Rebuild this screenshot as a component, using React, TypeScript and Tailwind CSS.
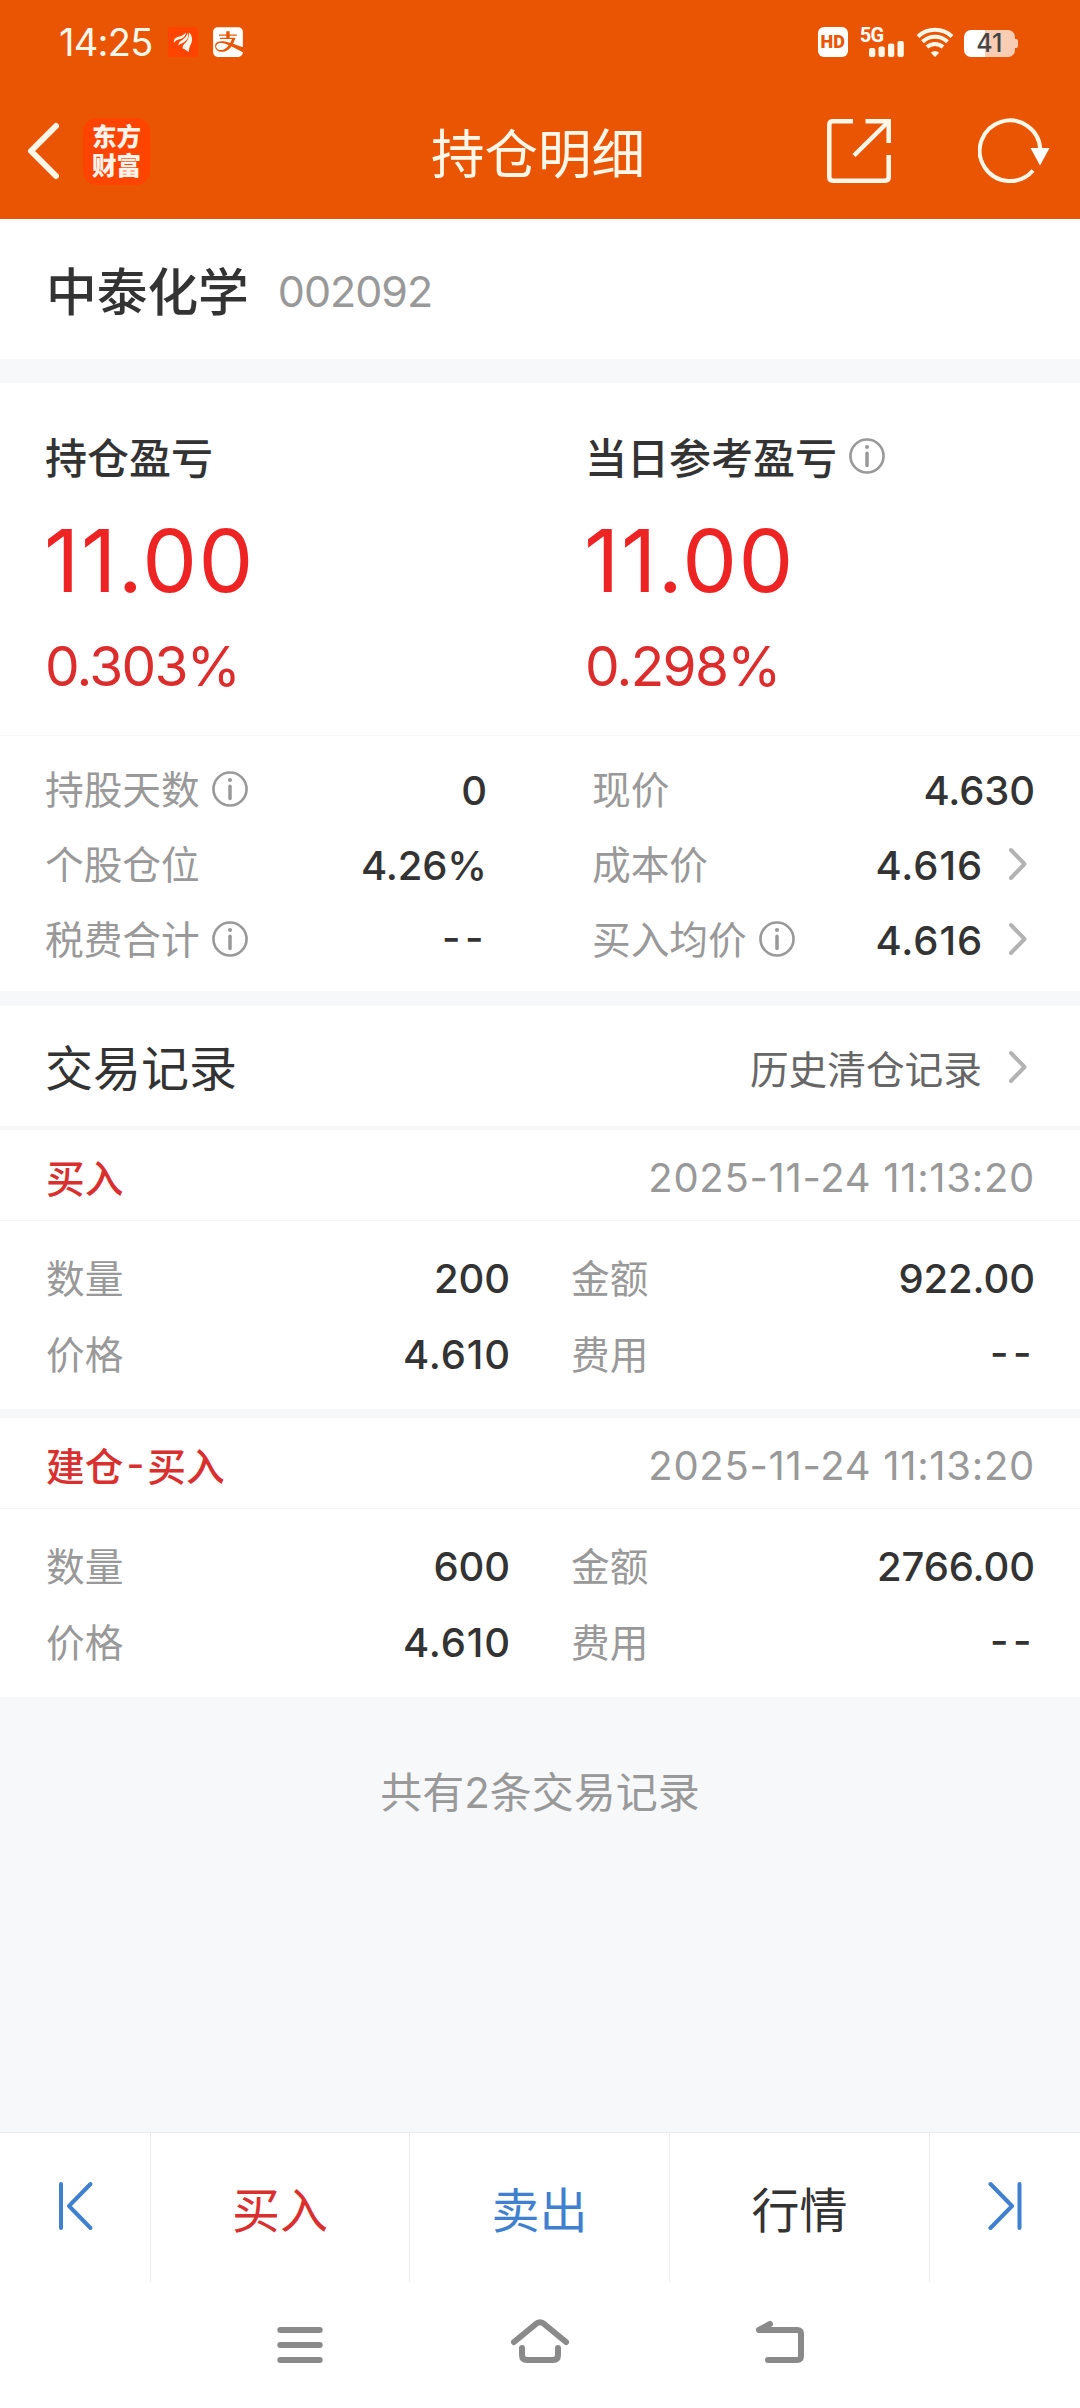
import React from 'react';
import clsx from 'clsx';
import { FaAlipay } from 'react-icons/fa';

const CJK = "font-['Noto_Sans_CJK_SC',sans-serif]";

function InfoIcon() {
  return (
    <svg width="36" height="36" viewBox="0 0 37 37" fill="none" stroke="#999999" className="shrink-0">
      <circle cx="18.5" cy="18.5" r="17" strokeWidth="2.7" />
      <circle cx="18.5" cy="9.3" r="2.1" fill="#999999" stroke="none" />
      <path d="M18.5 15.8V28.2" strokeWidth="3.6" strokeLinecap="round" />
    </svg>
  );
}

function Chevron() {
  return (
    <svg width="20" height="34" viewBox="0 0 20 34" fill="none" className="mr-[7px] ml-[26px] shrink-0">
      <path d="M3 3L16.5 17L3 31" stroke="#b3b3b3" strokeWidth="4" strokeLinecap="round" strokeLinejoin="round" />
    </svg>
  );
}

function Value({ children }: { children: string }) {
  const dashed = children === '--';
  const narrow = children.includes('1');
  return (
    <span
      className={clsx(
        'text-[40px] font-medium leading-none text-[#333333]',
        dashed && '-mt-[2px] -mr-px pb-[3px] tracking-[4.5px]',
        !dashed && (narrow ? '-mr-px tracking-[0.9px]' : 'tracking-[-0.1px]'),
      )}
    >
      {children}
    </span>
  );
}

function StatusBar() {
  return (
    <div className="flex h-[84px] items-center pl-[59px]">
      <span className="text-[38px] leading-none tracking-[-0.7px] text-[#fff8ea]">14:25</span>
      <svg width="30" height="30" viewBox="0 0 30 30" className="ml-[15px]">
        <rect width="30" height="30" rx="2" fill="#ff4400" />
        <g fill="#fff8ea">
          <path d="M6 16C5.500 12 7.500 10.500 10.500 9.800C13.500 9 16 8 18 5.500C17.500 9.500 15 11.500 11.500 12.300C9 12.900 7.200 14 6 16Z" />
          <path d="M10.500 18.500C10.500 15 12.500 14 14.500 12.700C17 11 19 9 20 5.500C21 10 19.500 13 16 15.200C13.500 16.600 12 17 10.500 18.500Z" />
          <path d="M14.500 21.500C14.500 18.500 16 17.200 17.500 15.700C19.500 13.500 21.200 10.500 21.200 5.500C24.500 8.500 25 14 22.500 18C21.500 20 20.800 22 20.800 25C18 23.500 16.500 21.500 14.500 21.500Z" />
        </g>
      </svg>
      <FaAlipay className="ml-[15px] h-[34px] w-[30px] text-white" />
      <div className="ml-[575px] flex h-[30px] w-[30px] items-center justify-center rounded-[6px] bg-white font-['Roboto',sans-serif] text-[18px] font-black leading-none text-[#ea5504]">
        HD
      </div>
      <div className="relative ml-[12px] h-[30px] w-[45px]">
        <span className="absolute -top-[2px] left-0 font-['Roboto',sans-serif] text-[20px] font-bold leading-none tracking-[-0.8px] text-white">5G</span>
        <svg width="45" height="30" viewBox="0 0 45 30" fill="#fff8ea">
          <rect x="9" y="21" width="6.300" height="9" rx="2" />
          <rect x="18.500" y="19.500" width="6.300" height="10.500" rx="2" />
          <rect x="28" y="16.500" width="6.300" height="13.500" rx="2" />
          <rect x="37.500" y="14" width="6.300" height="16" rx="2" />
        </svg>
      </div>
      <svg width="38" height="30" viewBox="0 0 38 30" fill="none" stroke="#fff8ea" strokeWidth="4" className="ml-[11px]">
        <path d="M2 9.500A25 25 0 0 1 36 9.500" />
        <path d="M6.500 14.700A18 18 0 0 1 31.500 14.700" />
        <path d="M11 20A12 12 0 0 1 27 20" />
        <path d="M19 30L14.800 25.800Q19 22 23.200 25.800Z" fill="#fff8ea" stroke="none" />
      </svg>
      <div className="ml-[10px] flex items-center pt-[3px]">
        <div className="flex h-[27px] w-[51px] items-center justify-center rounded-[7px] bg-linear-to-r from-white from-41% to-[#f9cdb4] to-41% text-[25px] font-medium leading-none text-[#444444]">
          41
        </div>
        <div className="h-[9px] w-[3px] rounded-r-[2px] bg-[#f9cdb4]" />
      </div>
    </div>
  );
}

function NavBar() {
  return (
    <div className="flex h-[135px] items-center pb-px pl-[26px]">
      <svg width="33" height="58" viewBox="0 0 33 58" fill="none">
        <path d="M30 4L5 29L30 54" stroke="#fff8ea" strokeWidth="6" strokeLinecap="round" strokeLinejoin="round" />
      </svg>
      <div className={clsx('ml-[24px] flex h-[67px] w-[67px] flex-col items-center justify-center rounded-[14px] bg-[#ff4400] pb-[3px] text-[24.500px] font-black leading-[29px] text-[#fff3ec]', CJK)}>
        <span>东方</span>
        <span>财富</span>
      </div>
      <h1 className={clsx('ml-[281px] w-[216px] text-[53.500px] font-normal leading-none text-[#fff8ea]', CJK)}>持仓明细</h1>
      <svg width="64" height="64" viewBox="0 0 64 64" fill="none" stroke="#fff8ea" strokeWidth="4.500" className="ml-[180px]">
        <path d="M26 2.300H6Q2.300 2.300 2.300 6V58Q2.300 61.700 6 61.700H58Q61.700 61.700 61.700 58V36" />
        <path d="M38.500 2.300H61.700V24" />
        <path d="M27 36.500L60.500 3.500" />
      </svg>
      <svg width="72" height="66" viewBox="0 0 72 66" fill="none" className="ml-[87px]">
        <path d="M55 52.500A30.300 30.300 0 1 1 62.300 32" stroke="#fff8ea" strokeWidth="4" />
        <path d="M52.500 30H71.500L62 47.500Z" fill="#ffffff" />
      </svg>
    </div>
  );
}

function ProfitColumn({ label, info, amount, percent }: { label: string; info?: boolean; amount: string; percent: string }) {
  return (
    <div className="pt-[52px]">
      <div className="flex h-[42px] items-center gap-[12px]">
        <span className={clsx('text-[42px] font-medium leading-none text-[#333333]', CJK)}>{label}</span>
        {info && <InfoIcon />}
      </div>
      <div className="-ml-px mt-[40px] text-[87px] leading-none tracking-[1.5px] text-[#ee2424]">{amount}</div>
      <div className="mt-[35px] text-[55px] leading-none tracking-[-1.7px] text-[#dd2c2c]">{percent}</div>
    </div>
  );
}

function StatRow({ label, info, value, arrow }: { label: string; info?: boolean; value: string; arrow?: boolean }) {
  return (
    <div className="flex h-[75px] items-center">
      <span className={clsx('pb-[2px] text-[38.7px] leading-none text-[#999999]', CJK)}>{label}</span>
      {info && <div className="ml-[12px]"><InfoIcon /></div>}
      <div className="ml-auto flex items-center">
        <div className="flex pt-[4px]">
          <Value>{value}</Value>
        </div>
        {arrow && <Chevron />}
      </div>
    </div>
  );
}

function RecordRow({ cells }: { cells: [string, string][] }) {
  return (
    <div className="flex h-[76px] gap-[61px]">
      {cells.map(([label, value]) => (
        <div key={label} className="flex w-[464px] items-center justify-between">
          <span className={clsx('text-[38.700px] leading-none text-[#999999]', CJK)}>{label}</span>
          <div className="flex pt-[6px]">
            <Value>{value}</Value>
          </div>
        </div>
      ))}
    </div>
  );
}

function TradeRecord({ title, time, qty, amount, price }: { title: string; time: string; qty: string; amount: string; price: string }) {
  return (
    <section className="h-[279px] bg-white">
      <div className="flex h-[91px] items-center justify-between border-b border-[#f5f6f8] pl-[46px] pr-[45px]">
        <div className={clsx('flex pt-[2px] text-[38.700px] font-medium leading-none text-[#d9302f]', CJK)}>
          {title.split('-').map((part, i) => (
            <React.Fragment key={part}>
              {i > 0 && <span className="px-[3px] font-['Inter',sans-serif]">-</span>}
              <span>{part}</span>
            </React.Fragment>
          ))}
        </div>
        <span className="pt-[6px] text-[40px] leading-none tracking-[0.700px] text-[#999999]">{time}</span>
      </div>
      <div className="pl-[46px] pr-[45px] pt-[17px]">
        <RecordRow cells={[['数量', qty], ['金额', amount]]} />
        <RecordRow cells={[['价格', price], ['费用', '--']]} />
      </div>
    </section>
  );
}

function BottomBar() {
  return (
    <div className="grid h-[150px] grid-cols-[151px_259px_260px_260px_150px] border-t border-[#ececec] bg-white">
      <div className="flex items-center border-r border-[#ececec] pb-[4px] pl-[58px]">
        <svg width="36" height="50" viewBox="0 0 36 50" fill="none" stroke="#3f80cf" strokeWidth="4" strokeLinecap="round" strokeLinejoin="round">
          <path d="M3 3V47M32.500 3L11 25L32.500 47" />
        </svg>
      </div>
      <div className={clsx('flex items-center justify-center border-r border-[#ececec] pb-[2px] text-[48px] leading-none text-[#d9302f]', CJK)}>买入</div>
      <div className={clsx('flex items-center justify-center border-r border-[#ececec] pb-[2px] text-[48px] leading-none text-[#3f80cf]', CJK)}>卖出</div>
      <div className={clsx('flex items-center justify-center border-r border-[#ececec] pb-[2px] text-[48px] leading-none text-[#333333]', CJK)}>行情</div>
      <div className="flex items-center pb-[4px] pl-[56px]">
        <svg width="36" height="50" viewBox="0 0 36 50" fill="none" stroke="#3f80cf" strokeWidth="4" strokeLinecap="round" strokeLinejoin="round">
          <path d="M33.500 3V47M4.500 3L26 25L4.500 47" />
        </svg>
      </div>
    </div>
  );
}

function SystemNav() {
  return (
    <div className="flex h-[126px] items-start bg-white pl-[277px] pt-[36px]">
      <svg width="46" height="46" viewBox="0 0 46 46" stroke="#8a8a8a" strokeWidth="6" strokeLinecap="round">
        <path d="M3.300 12H42.700M3.300 27H42.700M3.300 42H42.700" />
      </svg>
      <svg width="60" height="48" viewBox="0 0 60 48" fill="none" stroke="#8a8a8a" strokeWidth="6" strokeLinecap="round" strokeLinejoin="round" className="ml-[187px]">
        <path d="M4 24L26.500 5.500Q30 3 33.500 5.500L56 24" />
        <path d="M12 30V37Q12 42 17 42H43Q48 42 48 37V30" />
      </svg>
      <svg width="52" height="48" viewBox="0 0 52 48" fill="none" stroke="#8a8a8a" strokeWidth="6" strokeLinecap="round" strokeLinejoin="round" className="ml-[184px]">
        <path d="M16 6L5 12H43Q47 12 47 16V38Q47 42 43 42H14" />
      </svg>
    </div>
  );
}

export default function App() {
  return (
    <div className="flex h-[2408px] w-[1080px] flex-col overflow-hidden bg-[#f7f8fa] font-['Inter','Noto_Sans_CJK_SC',sans-serif] whitespace-nowrap">
      <header className="h-[219px] bg-[#ea5504]">
        <StatusBar />
        <NavBar />
      </header>

      <section className="flex h-[140px] items-center bg-white pl-[46px]">
        <h2 className={clsx('text-[50.700px] font-medium leading-none text-[#333333]', CJK)}>中泰化学</h2>
        <span className="ml-[29px] pt-[4px] text-[43px] leading-none tracking-[-1px] text-[#999999]">002092</span>
      </section>

      <section className="mt-[24px] grid h-[353px] grid-cols-2 border-b border-[#f5f6f8] bg-white">
        <div className="pl-[45px]">
          <ProfitColumn label="持仓盈亏" amount="11.00" percent="0.303%" />
        </div>
        <div className="pl-[45px]">
          <ProfitColumn label="当日参考盈亏" info amount="11.00" percent="0.298%" />
        </div>
      </section>

      <section className="flex h-[255px] bg-white pl-[45px] pr-[45px] pt-[15px]">
        <div className="w-[442px]">
          <StatRow label="持股天数" info value="0" />
          <StatRow label="个股仓位" value="4.26%" />
          <StatRow label="税费合计" info value="--" />
        </div>
        <div className="ml-[105px] w-[443px]">
          <StatRow label="现价" value="4.630" />
          <StatRow label="成本价" value="4.616" arrow />
          <StatRow label="买入均价" info value="4.616" arrow />
        </div>
      </section>

      <section className="mt-[15px] flex h-[120px] items-center justify-between bg-white pl-[45px] pr-[45px]">
        <h3 className={clsx('pb-[2px] text-[48px] font-normal leading-none text-[#333333]', CJK)}>交易记录</h3>
        <div className="flex items-center pt-[3px]">
          <span className={clsx('text-[38.700px] leading-none text-[#666666]', CJK)}>历史清仓记录</span>
          <Chevron />
        </div>
      </section>

      <div className="mt-[4px] flex flex-col gap-[9px]">
        <TradeRecord title="买入" time="2025-11-24 11:13:20" qty="200" amount="922.00" price="4.610" />
        <TradeRecord title="建仓-买入" time="2025-11-24 11:13:20" qty="600" amount="2766.00" price="4.610" />
      </div>

      <p className="pt-[75px] text-center text-[42px] leading-none text-[#999999]">共有2条交易记录</p>

      <footer className="mt-auto">
        <BottomBar />
        <SystemNav />
      </footer>
    </div>
  );
}
